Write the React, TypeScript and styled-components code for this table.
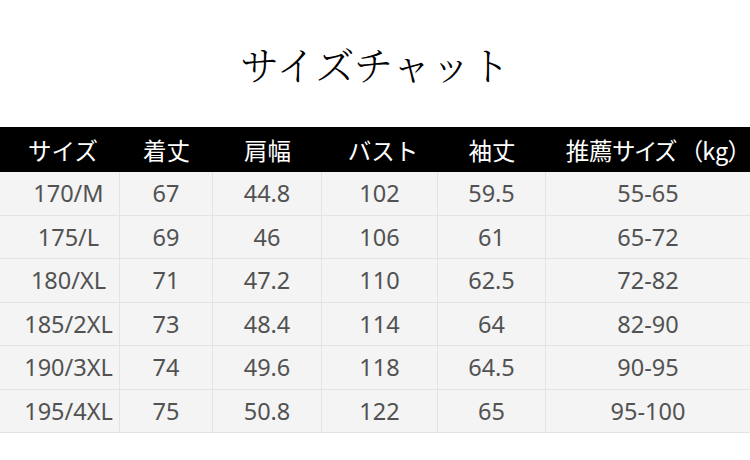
import React from "react";
import styled, { createGlobalStyle } from "styled-components";

const Global = createGlobalStyle`
  html, body { margin: 0; padding: 0; background: #ffffff; }
  body { width: 750px; height: 460px; overflow: hidden; }
`;

const Page = styled.div`
  width: 750px;
  height: 460px;
  display: flex;
  flex-direction: column;
  background: #ffffff;
`;

const Title = styled.h1`
  margin: 0;
  height: 127px;
  display: flex;
  align-items: center;
  justify-content: center;
  padding-bottom: 2px;
  box-sizing: border-box;
  font-family: "Noto Serif CJK JP", "Liberation Serif", "Noto Sans CJK JP", serif;
  font-weight: 300;
  font-size: 39px;
  letter-spacing: 0.3px;
  color: #000;
`;

const cols = "120px 93px 109px 116px 108px 204px";

const Table = styled.div`
  display: grid;
  grid-template-columns: ${cols};
`;

const HeadCell = styled.div<{ $shift?: number; $end?: boolean }>`
  height: 45px;
  background: #000;
  color: #fff;
  display: flex;
  align-items: center;
  justify-content: ${(p) => (p.$end ? "flex-end" : "center")};
  padding-left: ${(p) => p.$shift ?? 0}px;
  padding-right: ${(p) => (p.$end ? "10px" : "0")};
  box-sizing: border-box;
  font-family: "Noto Sans CJK JP", "Noto Sans", sans-serif;
  font-size: 23.5px;
  font-weight: 400;
  white-space: nowrap;
  font-feature-settings: ${(p) => (p.$end ? '"palt" 1' : "normal")};
`;

const Paren = styled.span`
  margin-left: 14px;
`;

const Cell = styled.div<{ $first?: boolean; $last?: boolean }>`
  height: 43.5px;
  background: #f4f4f4;
  color: #525252;
  display: flex;
  align-items: center;
  justify-content: center;
  padding-left: ${(p) => (p.$first ? "18px" : "0")};
  box-sizing: border-box;
  border-bottom: 1.5px solid #e3e3e3;
  border-right: ${(p) => (p.$last ? "none" : "1.5px solid #e3e3e3")};
  font-family: "Noto Sans", "Open Sans", sans-serif;
  font-size: 23.5px;
  font-weight: 400;
  white-space: nowrap;
`;

const headers: [React.ReactNode, string, number, boolean][] = [
  ["サイズ", "a", 6, false],
  ["着丈", "b", 0, false],
  ["肩幅", "c", 0, false],
  ["バスト", "d", 6, false],
  ["袖丈", "e", 0, false],
  [
    <>
      推薦サイズ<Paren>（kg）</Paren>
    </>,
    "f",
    0,
    true,
  ],
];

const rows = [
  ["170/M", "67", "44.8", "102", "59.5", "55-65"],
  ["175/L", "69", "46", "106", "61", "65-72"],
  ["180/XL", "71", "47.2", "110", "62.5", "72-82"],
  ["185/2XL", "73", "48.4", "114", "64", "82-90"],
  ["190/3XL", "74", "49.6", "118", "64.5", "90-95"],
  ["195/4XL", "75", "50.8", "122", "65", "95-100"],
];

export default function App() {
  return (
    <Page>
      <Global />
      <Title>サイズチャット</Title>
      <Table>
        {headers.map(([h, k, s, e]) => (
          <HeadCell key={k} $shift={s} $end={e}>
            {h}
          </HeadCell>
        ))}
        {rows.map((r) =>
          r.map((c, i) => (
            <Cell key={r[0] + i} $first={i === 0} $last={i === r.length - 1}>
              {c}
            </Cell>
          ))
        )}
      </Table>
    </Page>
  );
}
